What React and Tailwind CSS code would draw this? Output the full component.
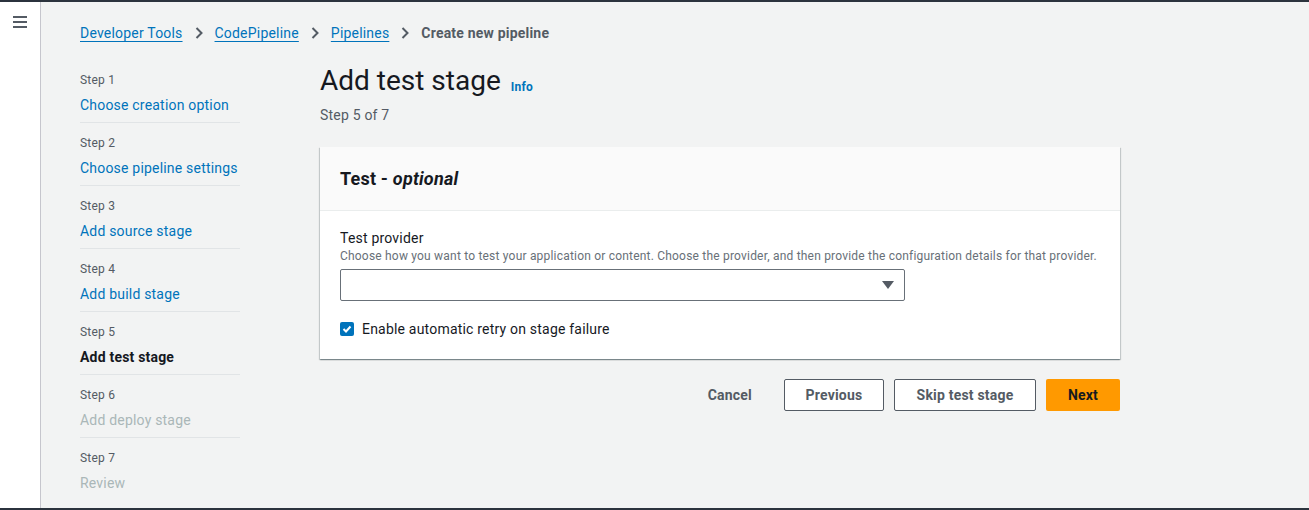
import React from 'react';

const steps = [
  { step: 'Step 1', title: 'Choose creation option', state: 'link' },
  { step: 'Step 2', title: 'Choose pipeline settings', state: 'link' },
  { step: 'Step 3', title: 'Add source stage', state: 'link' },
  { step: 'Step 4', title: 'Add build stage', state: 'link' },
  { step: 'Step 5', title: 'Add test stage', state: 'current' },
  { step: 'Step 6', title: 'Add deploy stage', state: 'disabled' },
  { step: 'Step 7', title: 'Review', state: 'disabled' },
];

const Chevron = () => (
  <svg width="10" height="14" viewBox="0 0 10 14" className="mx-[11px]">
    <path d="M2.5 2l5 5-5 5" fill="none" stroke="#545b64" strokeWidth="2" />
  </svg>
);

const App = () => {
  return (
    <div className="w-[1309px] h-[510px] bg-[#f2f3f3] border-t-[2px] border-b-[2px] border-[#2b333d] flex overflow-hidden text-[#16191f] tracking-[0.2px]" style={{ fontFamily: 'Roboto, "Noto Sans", sans-serif' }}>
      <div className="w-[41px] shrink-0 bg-white border-r border-[#c6c6cd] flex justify-center pt-[13px]">
        <svg width="16" height="14" viewBox="0 0 16 14">
          <path d="M1 2h14M1 7h14M1 12h14" stroke="#545b64" strokeWidth="2" />
        </svg>
      </div>
      <div className="flex-1 pl-[39px]">
        <nav className="flex items-center h-[28px] mt-[17px] text-[14px]">
          <a className="text-[#0073bb] underline underline-offset-[3px]">Developer Tools</a>
          <Chevron />
          <a className="text-[#0073bb] underline underline-offset-[3px]">CodePipeline</a>
          <Chevron />
          <a className="text-[#0073bb] underline underline-offset-[3px]">Pipelines</a>
          <Chevron />
          <span className="text-[#545b64] font-bold">Create new pipeline</span>
        </nav>
        <div className="flex mt-[24px]">
          <ul className="w-[160px] shrink-0">
            {steps.map((s, i) => (
              <li key={s.step} className={`pb-[7px] ${i < steps.length - 1 ? 'border-b border-[#e1e4e6]' : ''} ${i > 0 ? 'pt-[11px]' : ''}`}>
                <div className="text-[12px] text-[#545b64] leading-[18px]">{s.step}</div>
                <div
                  className={`text-[14px] leading-[20px] mt-[6px] ${
                    s.state === 'link' ? 'text-[#0073bb]' : s.state === 'current' ? 'font-bold text-[#16191f]' : 'text-[#aab7b8]'
                  }`}
                >
                  {s.title}
                </div>
              </li>
            ))}
          </ul>
          <div className="ml-[80px] w-[800px] -mt-[8px]">
            <div className="flex items-end">
              <h1 className="text-[28px] leading-[36px] tracking-normal">Add test stage</h1>
              <a className="ml-[10px] mb-[4px] text-[12px] leading-[16px] font-bold text-[#0073bb]">Info</a>
            </div>
            <div className="text-[14px] leading-[20px] text-[#545b64] mt-[6px]">Step 5 of 7</div>
            <div className="mt-[22px] bg-white shadow-[0_1px_1px_0_rgba(0,28,36,0.3),1px_1px_1px_0_rgba(0,28,36,0.15),-1px_1px_1px_0_rgba(0,28,36,0.15)]">
              <div className="h-[64px] bg-[#fafafa] border-b border-[#eaeded] flex items-center px-[20px]">
                <h2 className="text-[18px] font-bold">
                  Test - <i>optional</i>
                </h2>
              </div>
              <div className="px-[20px] pt-[17px] pb-[20px]">
                <div className="text-[14px] leading-[20px]">Test provider</div>
                <div className="text-[12px] leading-[16px] text-[#687078]">
                  Choose how you want to test your application or content. Choose the provider, and then provide the configuration details for that provider.
                </div>
                <div className="mt-[5px] w-[565px] h-[32px] border border-[#687078] rounded-[2px] flex items-center justify-end pr-[10px]">
                  <svg width="12" height="8" viewBox="0 0 12 8">
                    <path d="M0 0h12L6 8z" fill="#545b64" />
                  </svg>
                </div>
                <label className="flex items-center mt-[18px] text-[14px] leading-[20px]">
                  <span className="w-[14px] h-[14px] rounded-[2px] bg-[#0073bb] flex items-center justify-center mr-[8px]">
                    <svg width="10" height="10" viewBox="0 0 10 10">
                      <path d="M1.5 5l2.5 2.5 4.5-5" fill="none" stroke="white" strokeWidth="2" />
                    </svg>
                  </span>
                  Enable automatic retry on stage failure
                </label>
              </div>
            </div>
            <div className="flex justify-end items-center mt-[20px] text-[14px] font-bold">
              <button className="text-[#545b64] px-[20px] h-[32px] mr-[12px]">Cancel</button>
              <button className="h-[32px] w-[100px] border border-[#545b64] rounded-[2px] bg-white text-[#545b64]">Previous</button>
              <button className="h-[32px] w-[142px] ml-[10px] border border-[#545b64] rounded-[2px] bg-white text-[#545b64]">Skip test stage</button>
              <button className="h-[32px] w-[74px] ml-[10px] rounded-[2px] bg-[#ff9900] text-[#16191f]">Next</button>
            </div>
          </div>
        </div>
      </div>
    </div>
  );
};

export default App;
